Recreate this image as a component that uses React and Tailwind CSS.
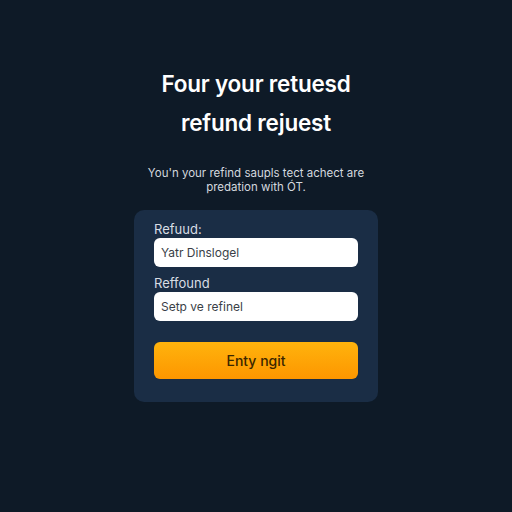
import React from 'react';

const Field = ({ label, value }) => (
  <div className="flex flex-col">
    <label className="text-[13px] leading-4 text-[#d8dde4] mb-[1px]">{label}</label>
    <div className="h-[29px] rounded-[6px] bg-white flex items-center px-[7px] text-[12px] text-[#3a3f47]">
      {value}
    </div>
  </div>
);

export default function App() {
  return (
    <div
      className="w-[512px] h-[512px] bg-[#0e1a27] flex flex-col items-center pt-[64px]"
      style={{ fontFamily: 'Inter, "Noto Sans", sans-serif' }}
    >
      <h1 className="text-[22.5px] leading-[39px] font-semibold text-white text-center tracking-[-0.2px]">
        Four your retuesd
        <br />
        refund rejuest
      </h1>

      <p className="mt-[24px] text-[11.5px] leading-[14px] text-[#d3d8df] text-center">
        You'n your refind saupls tect achect are
        <br />
        predation with ÓT.
      </p>

      <div className="mt-[16px] w-[244px] rounded-[10px] bg-[#1a2d45] px-5 pt-[11px] pb-[23px] flex flex-col">
        <Field label="Refuud:" value="Yatr Dinslogel" />
        <div className="mt-[8px]">
          <Field label="Reffound" value="Setp ve refinel" />
        </div>
        <button className="mt-[21px] h-[37px] rounded-[6px] bg-gradient-to-b from-[#ffb30d] to-[#fd9600] text-[14px] text-[#3a2600] font-medium">
          Enty ngit
        </button>
      </div>
    </div>
  );
}
